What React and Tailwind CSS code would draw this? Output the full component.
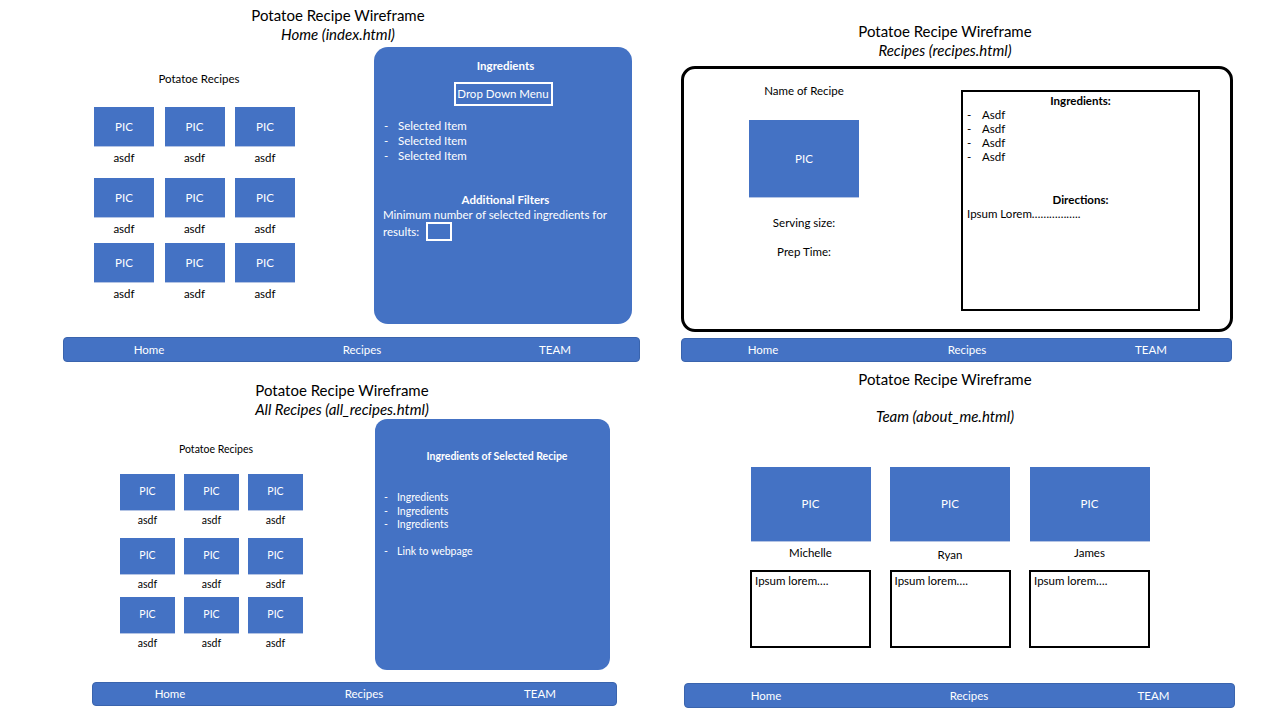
const blue = "bg-[#4472c4]";

function Pic({ w, h, size = "text-[11px]" }) {
  return (
    <div
      className={`${w} ${h} bg-[#4472c4] border-b border-[#b4c4e4] flex items-center justify-center text-white ${size}`}
    >
      PIC
    </div>
  );
}

function NavBar({ cols, className }) {
  return (
    <div
      className={`${className} bg-[#4472c4] border border-[#3a64ad] rounded-[4px] grid ${cols} items-center text-white text-[11.5px]`}
    >
      <span className="text-center">Home</span>
      <span className="text-center">Recipes</span>
      <span className="text-center">TEAM</span>
    </div>
  );
}

function Title({ sub, className }) {
  return (
    <div className={`${className} text-center text-black text-[15px] leading-[19px]`}>
      <div>Potatoe Recipe Wireframe</div>
      <div className="italic">{sub}</div>
    </div>
  );
}

// 3x3 grid of recipe thumbnails
function RecipeGrid({ rows, cols, picW, picH, labelGap, size, labelSize }) {
  return (
    <div className="flex flex-col">
      {rows.map((mt, i) => (
        <div key={i} className={`grid ${cols}`} style={{ marginTop: mt }}>
          {[0, 1, 2].map((j) => (
            <div key={j} className="flex flex-col items-center">
              <Pic w={picW} h={picH} size={size} />
              <span className={`${labelGap} ${labelSize} leading-[14px] text-black`}>asdf</span>
            </div>
          ))}
        </div>
      ))}
    </div>
  );
}

function HomeQuadrant() {
  return (
    <div className="w-[660px] h-[370px] pl-[63px] pt-[6px]">
      <Title sub="Home (index.html)" className="ml-[100px] w-[350px]" />
      <div className="flex mt-[3px]">
        <div className="w-[311px] flex flex-col">
          <div className="ml-[31px] w-[210px] text-center text-[11.5px] leading-[14px] mt-[25px]">
            Potatoe Recipes
          </div>
          <div className="ml-[31px] mt-[21px]">
            <RecipeGrid
              rows={[0, 13, 7]}
              cols="grid-cols-[60px_60px_60px] gap-x-[10.5px] w-[202px]"
              picW="w-[60px]"
              picH="h-[40px]"
              labelGap="mt-[4px]"
              size="text-[11.5px]"
              labelSize="text-[11.5px]"
            />
          </div>
        </div>
        <div className={`w-[258px] h-[277px] ${blue} rounded-[14px] text-white flex flex-col pl-[9px] pr-[4px]`}>
          <div className="text-center font-bold text-[11.5px] leading-[14px] mt-[12px]">Ingredients</div>
          <div className="self-center ml-[-5px] mt-[9px] w-[99px] h-[24px] border-2 border-white flex items-center justify-center text-[11.5px]">
            Drop Down Menu
          </div>
          <ul className="mt-[12px] text-[11.5px] leading-[15px]">
            {["Selected Item", "Selected Item", "Selected Item"].map((t, i) => (
              <li key={i} className="flex">
                <span className="w-[15px] pl-[1px]">-</span>
                <span>{t}</span>
              </li>
            ))}
          </ul>
          <div className="text-center font-bold text-[11.5px] leading-[15px] mt-[29px]">Additional Filters</div>
          <div className="text-[11.5px] leading-[15px] pr-[2px] whitespace-nowrap">
            Minimum number of selected ingredients for
          </div>
          <div className="flex items-center text-[11.5px] leading-[15px]">
            <span>results:</span>
            <span className="ml-[7px] w-[26px] h-[19px] border-2 border-white"></span>
          </div>
        </div>
      </div>
      <NavBar cols="grid-cols-[170px_256px_130px]" className="w-[577px] h-[25px] mt-[13px]" />
    </div>
  );
}

function RecipeQuadrant() {
  return (
    <div className="w-[620px] h-[370px] pl-[21px] pt-[22px]">
      <Title sub="Recipes (recipes.html)" className="ml-[89px] w-[350px]" />
      <div className="mt-[6px] w-[552px] h-[266px] border-[3px] border-black rounded-[14px] flex">
        <div className="w-[240px] flex flex-col items-center text-[11.5px] text-black">
          <div className="leading-[14px] mt-[15px]">Name of Recipe</div>
          <div className="mt-[22px]">
            <Pic w="w-[110px]" h="h-[78px]" size="text-[11.5px]" />
          </div>
          <div className="leading-[14px] mt-[18px]">Serving size:</div>
          <div className="leading-[14px] mt-[15px]">Prep Time:</div>
        </div>
        <div className="ml-[37px] mt-[21px] w-[239px] h-[221px] border-2 border-black flex flex-col px-[4px] text-[11.5px] text-black">
          <div className="text-center font-bold leading-[14px] mt-[2px]">Ingredients:</div>
          <ul className="leading-[14px]">
            {["Asdf", "Asdf", "Asdf", "Asdf"].map((t, i) => (
              <li key={i} className="flex">
                <span className="w-[15px]">-</span>
                <span>{t}</span>
              </li>
            ))}
          </ul>
          <div className="text-center font-bold leading-[14px] mt-[29px]">Directions:</div>
          <div className="leading-[14px]">Ipsum Lorem……………..</div>
        </div>
      </div>
      <NavBar cols="grid-cols-[162px_246px_122px]" className="w-[551px] h-[24px] mt-[6px]" />
    </div>
  );
}

function AllRecipesQuadrant() {
  return (
    <div className="w-[660px] h-[350px] pl-[92px] pt-[11px]">
      <Title sub="All Recipes (all_recipes.html)" className="ml-[75px] w-[350px]" />
      <div className="flex">
        <div className="w-[283px] flex flex-col">
          <div className="ml-[28px] w-[192px] text-center text-[10.5px] leading-[13px] mt-[24px]">
            Potatoe Recipes
          </div>
          <div className="ml-[28px] mt-[18px]">
            <RecipeGrid
              rows={[0, 11, 6]}
              cols="grid-cols-[55px_55px_55px] gap-x-[9px] w-[183px]"
              picW="w-[55px]"
              picH="h-[37px]"
              labelGap="mt-[2px]"
              size="text-[10.5px]"
              labelSize="text-[10.5px]"
            />
          </div>
        </div>
        <div className={`w-[235px] h-[251px] ${blue} rounded-[12px] text-white flex flex-col pl-[9px]`}>
          <div className="text-center font-bold text-[10.5px] leading-[13px] mt-[31px]">
            Ingredients of Selected Recipe
          </div>
          <ul className="mt-[28px] text-[10.5px] leading-[13.5px]">
            {["Ingredients", "Ingredients", "Ingredients", "", "Link to webpage"].map((t, i) =>
              t ? (
                <li key={i} className="flex">
                  <span className="w-[13px]">-</span>
                  <span>{t}</span>
                </li>
              ) : (
                <li key={i} className="h-[13.5px]"></li>
              )
            )}
          </ul>
        </div>
      </div>
      <NavBar cols="grid-cols-[154px_234px_118px]" className="w-[525px] h-[24px] mt-[12px]" />
    </div>
  );
}

function TeamQuadrant() {
  const team = [
    { name: "Michelle", mt: "mt-[4px]" },
    { name: "Ryan", mt: "mt-[6px]" },
    { name: "James", mt: "mt-[4px]" },
  ];
  return (
    <div className="w-[620px] h-[350px] pl-[24px]">
      <div className="ml-[86px] w-[350px] text-center text-black text-[15px] leading-[19px]">
        Potatoe Recipe Wireframe
      </div>
      <div className="ml-[86px] w-[350px] text-center text-black text-[15px] leading-[19px] italic mt-[18px]">
        Team (about_me.html)
      </div>
      <div className="ml-[66px] mt-[41px] flex gap-x-[18.5px]">
        {team.map((m) => (
          <div key={m.name} className="w-[121px] flex flex-col items-center text-[11.5px] text-black">
            <Pic w="w-[120px]" h="h-[75px]" size="text-[11.5px]" />
            <div className="h-[28px]">
              <div className={`${m.mt} leading-[14px]`}>{m.name}</div>
            </div>
            <div className="self-stretch h-[78px] border-2 border-black px-[3px] leading-[14px] pt-[2px]">
              Ipsum lorem….
            </div>
          </div>
        ))}
      </div>
      <NavBar cols="grid-cols-[162px_244px_125px]" className="w-[551px] h-[25px] mt-[35px]" />
    </div>
  );
}

export default function App() {
  return (
    <div
      className="w-[1280px] h-[720px] bg-white overflow-hidden grid grid-cols-[660px_620px] grid-rows-[370px_350px]"
      style={{ fontFamily: "Lato, 'Open Sans', sans-serif" }}
    >
      <HomeQuadrant />
      <RecipeQuadrant />
      <AllRecipesQuadrant />
      <TeamQuadrant />
    </div>
  );
}
